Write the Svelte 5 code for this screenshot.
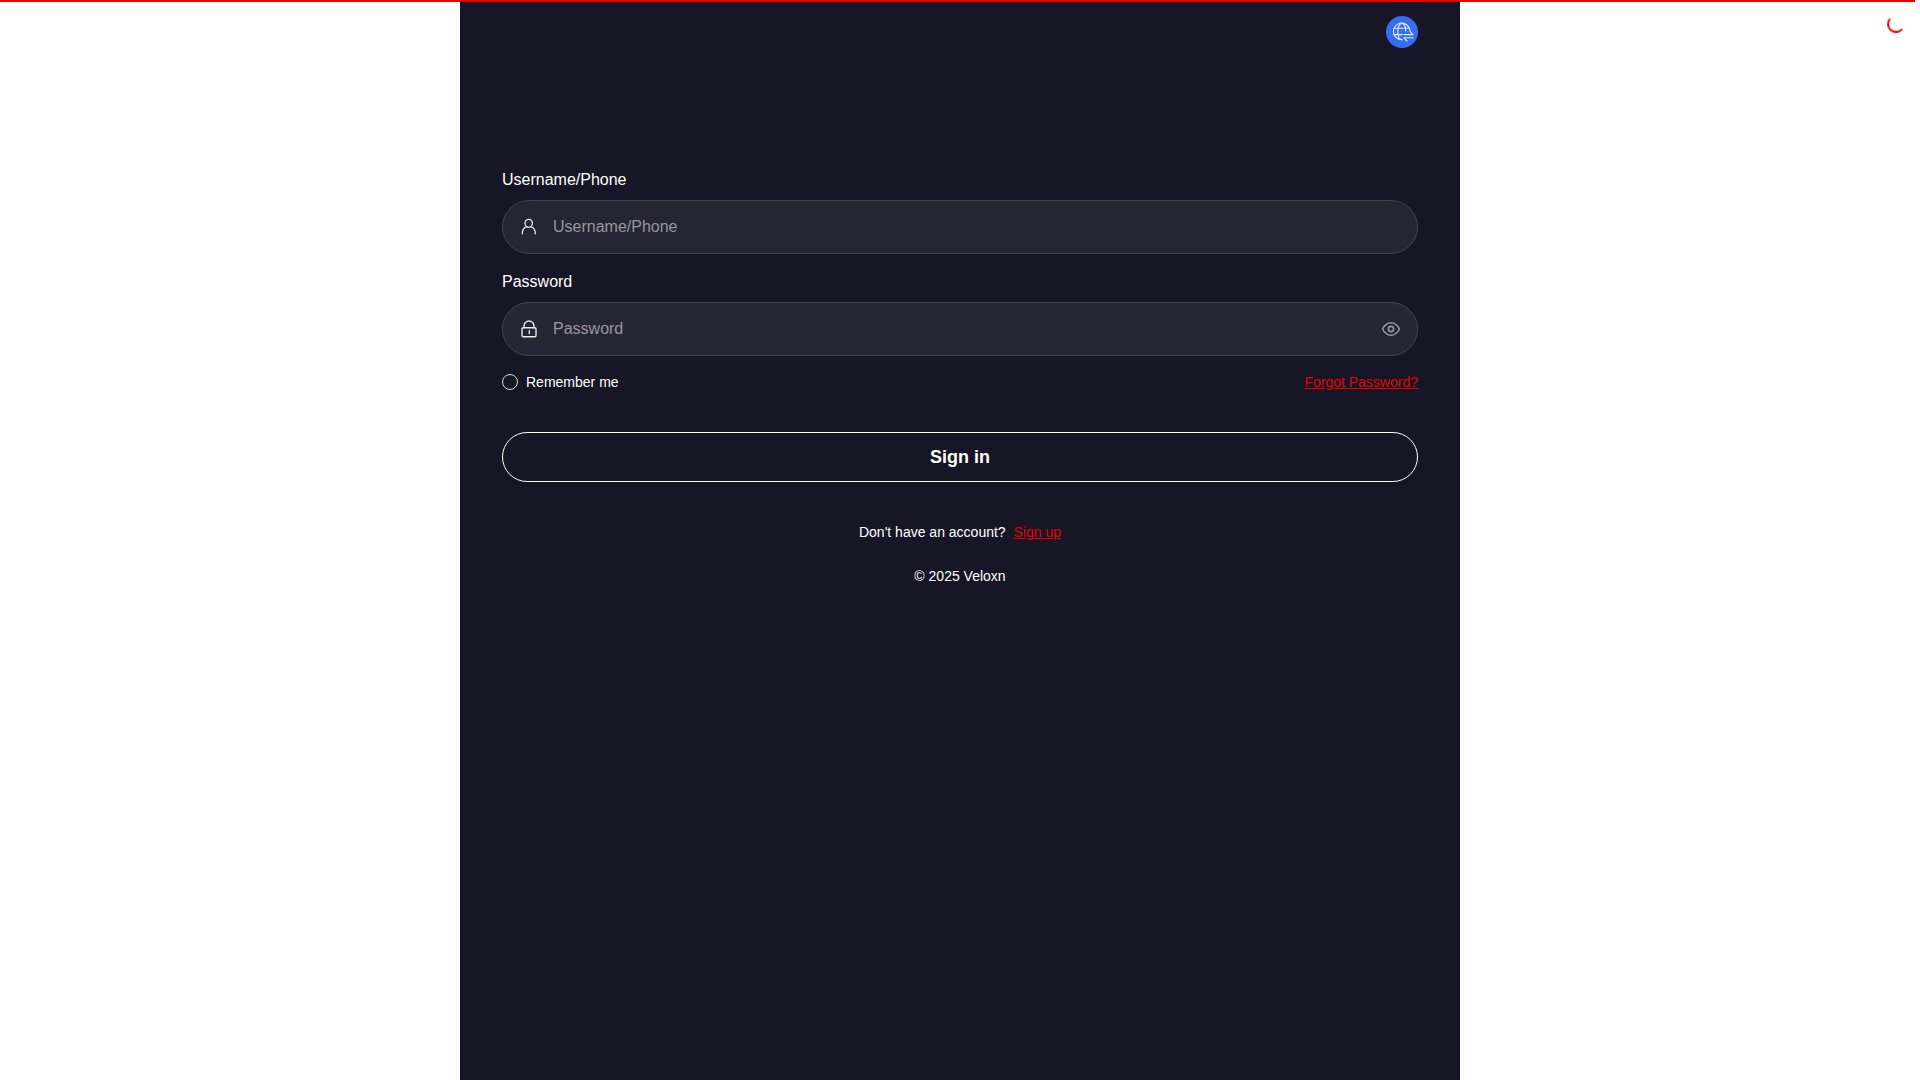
<script>
  let username = $state('');
  let password = $state('');
  let remember = $state(false);
  let showPassword = $state(false);
  let progress = $state(99.74);

  function submit(e) {
    e.preventDefault();
  }
</script>

<div class="progress">
  <div class="bar" style="width: {progress}%"></div>
  <div class="spinner"></div>
</div>

<main class="page">
  <header class="header">
    <button class="lang" type="button" aria-label="Change language">
      <svg viewBox="0 0 32 32" width="32" height="32" fill="none" stroke="#e4ecff" stroke-width="1.1" stroke-linecap="round" stroke-linejoin="round">
        <path d="M24 14.4A8.3 8.3 0 1 0 16 23.7" />
        <path d="M19.8 15c-.2-4.6-1.8-7.6-4-7.6s-4 3.4-4 8.2 1.8 8.1 4.2 8.1" />
        <path d="M8.4 12.3h14.8M8 18.6h8.6" />
        <path d="M18 18.6h9l-3-3.2M27.2 21.8H18l3 3.2" />
      </svg>
    </button>
  </header>

  <form class="form" onsubmit={submit}>
    <div class="group">
      <label for="username">Username/Phone</label>
      <div class="field">
        <svg class="icon" viewBox="0 0 20 20" fill="none" stroke="#e9e9eb" stroke-width="1.3" stroke-linecap="round">
          <ellipse cx="9.7" cy="6.3" rx="3.7" ry="4" />
          <path d="M3.3 16.8c0-3.8 1.7-6.4 4.8-7.1M16.3 16.8c0-3.8-1.8-6.4-4.8-7.1" />
        </svg>
        <input id="username" type="text" placeholder="Username/Phone" bind:value={username} />
      </div>
    </div>

    <div class="group">
      <label for="password">Password</label>
      <div class="field">
        <svg class="icon" viewBox="0 0 20 20" fill="none" stroke="#e9e9eb" stroke-width="1.4" stroke-linecap="round">
          <rect x="3" y="8.7" width="14" height="9" rx="1.2" />
          <path d="M5 8.7V7a5 5 0 0 1 10 0v1.7M10.3 11.6v3" />
        </svg>
        <input
          id="password"
          type={showPassword ? 'text' : 'password'}
          placeholder="Password"
          bind:value={password}
        />
        <button
          class="eye"
          type="button"
          aria-label="Show password"
          onclick={() => (showPassword = !showPassword)}
        >
          <svg viewBox="0 0 20 20" width="20" height="20" fill="none" stroke="#98979e" stroke-width="1.6">
            <path d="M1.6 10C3.6 6 6.5 3.8 10 3.8S16.4 6 18.4 10c-2 4-4.9 6.2-8.4 6.2S3.6 14 1.6 10z" />
            <circle cx="10" cy="10" r="2.6" />
          </svg>
        </button>
      </div>
    </div>

    <div class="options">
      <label class="remember">
        <input type="checkbox" bind:checked={remember} />
        Remember me
      </label>
      <a href="#forgot">Forgot Password?</a>
    </div>

    <button class="submit" type="submit">Sign in</button>
  </form>

  <p class="signup">Don't have an account? <a href="#signup">Sign up</a></p>
  <p class="copyright">© 2025 Veloxn</p>
</main>

<style>
  :global(body) {
    margin: 0;
    background: #fff;
    font-family: 'Liberation Sans', Arial, sans-serif;
  }

  .progress .bar {
    position: fixed;
    top: 0;
    left: 0;
    height: 2px;
    background: #e60000;
    z-index: 2;
  }

  .progress .spinner {
    position: fixed;
    top: 15px;
    right: 15px;
    box-sizing: border-box;
    width: 18px;
    height: 18px;
    border: 2px solid transparent;
    border-top-color: #e60000;
    border-left-color: #e60000;
    border-radius: 50%;
    transform: rotate(-95deg);
  }

  .page {
    box-sizing: border-box;
    max-width: 1000px;
    min-height: 100vh;
    margin: 0 auto;
    padding: 0 42px;
    background: #171626;
    color: #fff;
    font-size: 14px;
    line-height: 20px;
  }

  .header {
    display: flex;
    justify-content: flex-end;
    padding: 16px 0;
  }

  .lang {
    display: flex;
    padding: 0;
    border: none;
    border-radius: 50%;
    background: #356ef5;
    cursor: pointer;
  }

  .form {
    display: flex;
    flex-direction: column;
    gap: 16px;
    padding-top: 104px;
  }

  .group {
    display: flex;
    flex-direction: column;
    gap: 8px;
    font-size: 16px;
    line-height: 24px;
  }

  .field {
    box-sizing: border-box;
    display: flex;
    align-items: center;
    height: 54px;
    padding: 0 16px;
    border: 1px solid #43405a;
    border-radius: 27px;
    background: #262533;
  }

  .icon {
    width: 20px;
    height: 20px;
    flex: none;
  }

  .field input {
    flex: 1;
    min-width: 0;
    padding: 0 14px;
    border: none;
    outline: none;
    background: none;
    color: #fff;
    font: inherit;
  }

  .field input::placeholder {
    color: #98979e;
    opacity: 1;
  }

  .eye {
    display: flex;
    padding: 0;
    border: none;
    background: none;
    cursor: pointer;
  }

  .options {
    display: flex;
    align-items: center;
    justify-content: space-between;
  }

  .remember {
    display: flex;
    align-items: center;
    gap: 8px;
  }

  .remember input {
    appearance: none;
    width: 16px;
    height: 16px;
    margin: 0;
    border: 1px solid #dcdcdf;
    border-radius: 50%;
  }

  .remember input:checked {
    background: #e60000;
  }

  a {
    color: #e60000;
  }

  .submit {
    height: 50px;
    margin-top: 24px;
    border: 1px solid #fff;
    border-radius: 25px;
    background: none;
    color: #fff;
    font: bold 18px/24px 'Liberation Sans', Arial, sans-serif;
    cursor: pointer;
  }

  .signup,
  .copyright {
    margin: 0;
    text-align: center;
  }

  .signup {
    padding: 40px 0 24px;
  }

  .signup a {
    margin-left: 4px;
  }
</style>
